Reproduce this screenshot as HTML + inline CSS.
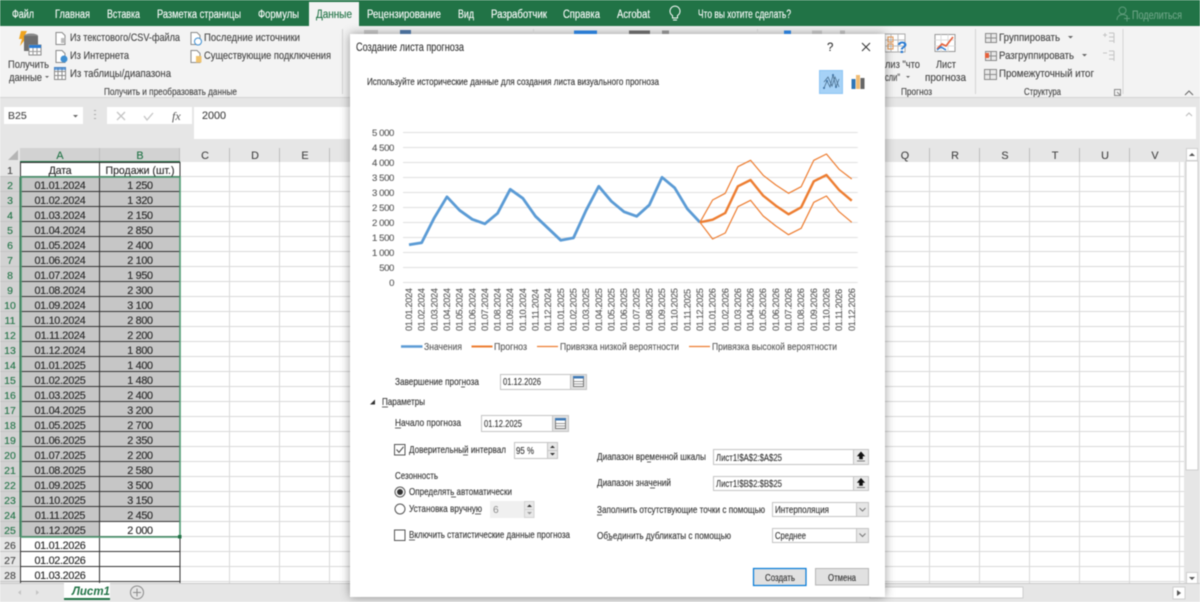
<!DOCTYPE html>
<html lang="ru"><head><meta charset="utf-8"><title>Создание листа прогноза</title>
<style>
html,body{margin:0;padding:0;background:#fff;width:1200px;height:602px;overflow:hidden}
svg{display:block;filter:blur(.4px)}
text{font-family:"Liberation Sans",sans-serif;font-size:10.8px;fill:#444;stroke:#444;stroke-width:.12px;white-space:pre}
.tab{font-size:11.5px;fill:#fff;stroke:#fff}
.c{font-size:10.8px;letter-spacing:-.3px;fill:#262626;stroke:#262626;text-anchor:middle}
.rh{font-size:10.5px;fill:#217346;stroke:#217346;text-anchor:middle}
.rn{font-size:10.5px;fill:#444;text-anchor:middle}
.ch{font-size:10.8px;fill:#444;text-anchor:middle}
.d{font-size:10.2px;fill:#333;stroke:#333}
.ax{font-size:9.6px;letter-spacing:-.4px;fill:#595959;stroke:#595959;text-anchor:end}
.xl{font-size:9.2px;letter-spacing:-.35px;fill:#595959;stroke:#595959}
.lg{font-size:10.2px;fill:#595959;stroke:#595959}
</style></head><body>
<svg width="1200" height="602" viewBox="0 0 1200 602" xmlns="http://www.w3.org/2000/svg">
<defs>
<pattern id="g" x="180" y="162" width="50" height="15" patternUnits="userSpaceOnUse"><path d="M49.500 0V15M0 14.500H50" stroke="#d9d9d9" fill="none"/></pattern>
<pattern id="r" x="0" y="162" width="20" height="15" patternUnits="userSpaceOnUse"><path d="M0 14.500H20" stroke="#c4c4c4" fill="none"/></pattern>
<pattern id="k" x="20" y="162" width="160" height="15" patternUnits="userSpaceOnUse"><path d="M0 14.500H160" stroke="#333" fill="none"/></pattern>
<filter id="sh" x="-5%" y="-5%" width="110%" height="110%"><feDropShadow dx="0" dy="0" stdDeviation="5" flood-color="#000" flood-opacity=".4"/></filter>
</defs>

<!-- ribbon -->
<rect width="1200" height="602" fill="#e6e6e6"/>
<rect width="1200" height="26" fill="#217346"/>
<rect y="26" width="1200" height="71" fill="#f3f3f3"/>
<rect y="97" width="1200" height="1" fill="#d4d4d4"/>
<rect x="309" y="2" width="50" height="24" fill="#f3f3f3"/>
<text class="tab" x="12" y="18" textLength="22" lengthAdjust="spacingAndGlyphs">Файл</text>
<text class="tab" x="55" y="18" textLength="35" lengthAdjust="spacingAndGlyphs">Главная</text>
<text class="tab" x="107" y="18" textLength="33" lengthAdjust="spacingAndGlyphs">Вставка</text>
<text class="tab" x="157" y="18" textLength="84" lengthAdjust="spacingAndGlyphs">Разметка страницы</text>
<text class="tab" x="258" y="18" textLength="41" lengthAdjust="spacingAndGlyphs">Формулы</text>
<text class="tab" x="316" y="18" textLength="36" lengthAdjust="spacingAndGlyphs" style="fill:#217346;stroke:#217346">Данные</text>
<text class="tab" x="367" y="18" textLength="74" lengthAdjust="spacingAndGlyphs">Рецензирование</text>
<text class="tab" x="458" y="18" textLength="16" lengthAdjust="spacingAndGlyphs">Вид</text>
<text class="tab" x="491" y="18" textLength="56" lengthAdjust="spacingAndGlyphs">Разработчик</text>
<text class="tab" x="563" y="18" textLength="37" lengthAdjust="spacingAndGlyphs">Справка</text>
<text class="tab" x="617" y="18" textLength="33" lengthAdjust="spacingAndGlyphs">Acrobat</text>
<path d="M672.500 15.500a5 5 0 1 1 5 0v2.500h-5zM673 20h4" fill="none" stroke="#fff"/>
<text class="tab" x="698" y="18" textLength="93" lengthAdjust="spacingAndGlyphs">Что вы хотите сделать?</text>
<path d="M1122.500 10.500m-3.500 0a3.500 3.500 0 1 0 7 0a3.500 3.500 0 1 0-7 0M1117 20c0-3.500 2.500-5.500 5.500-5.500s4 1 5 2M1124 18.500h6M1127 15.500v6" fill="none" stroke="#5f9c7b"/>
<text class="tab" x="1132" y="19" textLength="50" lengthAdjust="spacingAndGlyphs" style="fill:#6ea587;stroke:#6ea587">Поделиться</text>

<!-- data group icons -->
<path d="M21 31h6l-3 6h3l-7 9 2-7h-3z" fill="#f0a41e"/>
<ellipse cx="31" cy="36" rx="7" ry="2.500" fill="#8a8a8a"/><rect x="24" y="36" width="14" height="15" fill="#6f6f6f"/>
<rect x="29" y="45" width="12" height="10" fill="#fff" stroke="#8a8a8a"/><rect x="29" y="45" width="12" height="3" fill="#2b7cd3"/>
<path d="M33 48v7M37 48v7M29 51.500h12" stroke="#999"/>
<text x="8" y="68" textLength="41" lengthAdjust="spacingAndGlyphs">Получить</text>
<text x="9" y="81" textLength="33" lengthAdjust="spacingAndGlyphs">данные</text><path d="M45 76h4l-2 2z" fill="#666"/>
<g fill="#fff" stroke="#8a8a8a"><path d="M56 32.500h6l3 3v9H56z"/><path d="M56 50.500h6l3 3v9H56z"/><rect x="54.500" y="67.500" width="11" height="12"/><path d="M191 32.500h6l3 3v9h-9zM191 50.500h6l3 3v9h-9z"/></g>
<path d="M54.500 71.500h11M54.500 75.500h11M58 67.500v12M62 67.500v12" stroke="#8a8a8a" fill="none"/>
<rect x="54" y="67" width="12" height="3" fill="#2b7cd3" opacity=".7"/>
<circle cx="64" cy="59" r="3.500" fill="#3f8fd2"/><rect x="61" y="38" width="4" height="5" fill="#bbb"/>
<circle cx="198" cy="41.500" r="3.500" fill="#fff" stroke="#3f8fd2"/><rect x="196" y="56" width="5.500" height="6.500" fill="#f0c36e"/>
<text x="70" y="41" textLength="110" lengthAdjust="spacingAndGlyphs">Из текстового/CSV-файла</text>
<text x="70" y="59" textLength="59" lengthAdjust="spacingAndGlyphs">Из Интернета</text>
<text x="70" y="77" textLength="101" lengthAdjust="spacingAndGlyphs">Из таблицы/диапазона</text>
<text x="204" y="41" textLength="96" lengthAdjust="spacingAndGlyphs">Последние источники</text>
<text x="204" y="59" textLength="127" lengthAdjust="spacingAndGlyphs">Существующие подключения</text>
<text x="104" y="95" textLength="133" lengthAdjust="spacingAndGlyphs" style="font-size:9.800px">Получить и преобразовать данные</text>
<rect x="342" y="29" width="1" height="65" fill="#d4d4d4"/>

<!-- right groups -->
<rect x="885" y="34" width="20" height="18" fill="#fff" stroke="#aaa"/><path d="M891 34v18M898 34v18M885 40h20M885 46h20" stroke="#bbb"/>
<rect x="888" y="37" width="5" height="5" fill="none" stroke="#e99a55"/><rect x="888" y="44" width="5" height="5" fill="none" stroke="#e99a55"/>
<text x="897" y="53" style="font-size:17px;font-weight:bold;fill:#2b7cd3;stroke:none">?</text>
<text x="885" y="68" textLength="35" lengthAdjust="spacingAndGlyphs">лиз "что</text>
<text x="885" y="81" textLength="15" lengthAdjust="spacingAndGlyphs">сли"</text><path d="M906 76h4l-2 2z" fill="#666"/>
<rect x="935" y="34.500" width="20" height="17" fill="#fff" stroke="#999"/><path d="M941 34.500v17M948 34.500v17M935 40h20M935 46h20" stroke="#ddd"/>
<path d="M937 49l5-5 4 2 7-9" fill="none" stroke="#e5603a" stroke-width="1.600"/><path d="M937 50l4-3 5 3" fill="none" stroke="#2b7cd3" stroke-width="1.400"/>
<text x="936" y="68" textLength="20" lengthAdjust="spacingAndGlyphs">Лист</text>
<text x="925" y="81" textLength="41" lengthAdjust="spacingAndGlyphs">прогноза</text>
<text x="901" y="95" textLength="31" lengthAdjust="spacingAndGlyphs" style="font-size:9.800px">Прогноз</text>
<rect x="975" y="29" width="1" height="65" fill="#d4d4d4"/>
<g fill="#e8e8e8" stroke="#8a8a8a"><rect x="985.500" y="33.500" width="11" height="9"/><rect x="985.500" y="51.500" width="11" height="9"/><rect x="984.500" y="69.500" width="12" height="10"/></g>
<path d="M985 38h12M991 33v9M985 56h12M991 51v9M984 74.500h13M990 69v11" stroke="#8a8a8a"/>
<rect x="985" y="53" width="4" height="5" fill="#e5603a"/>
<text x="999" y="41" textLength="61" lengthAdjust="spacingAndGlyphs">Группировать</text><path d="M1068 36h5l-2.500 2.500z" fill="#666"/>
<text x="999" y="59" textLength="75" lengthAdjust="spacingAndGlyphs">Разгруппировать</text><path d="M1082 54h5l-2.500 2.500z" fill="#666"/>
<text x="999" y="77" textLength="95" lengthAdjust="spacingAndGlyphs">Промежуточный итог</text>
<path d="M1103 35h4M1105 33v4M1109 33h5M1109 37h5M1109 41h5M1114 33v10M1103 53h4M1109 51h5M1109 55h5M1109 59h5M1114 51v10" stroke="#c4c4c4" fill="none"/>
<text x="1024" y="95" textLength="37" lengthAdjust="spacingAndGlyphs" style="font-size:9.800px">Структура</text>
<path d="M1114.500 89.500h6v6h-6zM1117 92l3 3" stroke="#8a8a8a" fill="none"/>
<rect x="1122.500" y="29" width="1" height="65" fill="#d4d4d4"/>
<path d="M1185 95l4-4 4 4" fill="none" stroke="#666"/>

<!-- formula bar -->
<rect x="4" y="107" width="79" height="17" fill="#fff"/>
<text x="8" y="119" style="font-size:10.500px">B25</text><path d="M73 115h5l-2.500 2.500z" fill="#666"/>
<path d="M95 110v1M95 114v1M95 118v1" stroke="#aaa" stroke-width="2"/>
<rect x="107" y="107" width="85" height="17" fill="#fff"/>
<path d="M117 112l8 8M125 112l-8 8" stroke="#c4c4c4" stroke-width="1.300"/><path d="M144 116l3 4 6-7" fill="none" stroke="#c4c4c4" stroke-width="1.300"/>
<text x="172" y="120" style="font-family:'Liberation Serif',serif;font-style:italic;font-size:12px;fill:#555;stroke:none">fx</text>
<rect x="194" y="107" width="1002" height="32" fill="#fff"/>
<text x="202" y="119" style="font-size:10.800px">2000</text>
<path d="M1186 116l3-3 3 3" fill="none" stroke="#bbb"/>

<!-- headers -->
<rect y="148" width="1184" height="14" fill="#e6e6e6"/>
<rect x="20" y="148" width="160" height="14" fill="#d2d2d2"/>
<path d="M18 150v10H8z" fill="#b5b5b5"/>
<path d="M99.500 148v14M179.500 148v14M229.500 148v14M279.500 148v14M329.500 148v14M879.500 148v14M929.500 148v14M979.500 148v14M1029.500 148v14M1079.500 148v14M1129.500 148v14" stroke="#bdbdbd"/>
<rect x="20" y="161" width="160" height="1.500" fill="#217346"/>
<text class="ch" x="60" y="159" style="fill:#217346;stroke:#217346">A</text><text class="ch" x="140" y="159" style="fill:#217346;stroke:#217346">B</text>
<text class="ch" x="205" y="159">C</text><text class="ch" x="255" y="159">D</text><text class="ch" x="305" y="159">E</text>
<text class="ch" x="905" y="159">Q</text><text class="ch" x="955" y="159">R</text><text class="ch" x="1005" y="159">S</text><text class="ch" x="1055" y="159">T</text><text class="ch" x="1105" y="159">U</text><text class="ch" x="1155" y="159">V</text>

<!-- sheet -->
<rect x="20" y="162" width="1164" height="421" fill="#fff"/>
<rect x="180" y="162" width="1004" height="421" fill="url(#g)"/>
<rect y="162" width="20" height="421" fill="#e6e6e6"/>
<rect y="177" width="20" height="360" fill="#d2d2d2"/>
<rect y="162" width="20" height="421" fill="url(#r)"/>
<rect x="19.500" y="177" width="1" height="360" fill="#217346"/>
<rect x="20" y="177" width="160" height="345" fill="#c6c6c6"/>
<rect x="20" y="522" width="80" height="15" fill="#c6c6c6"/>
<rect x="20" y="162" width="160" height="421" fill="url(#k)"/>
<path d="M20.500 162V583M99.500 162V583M180 162V583M20 162.500H180" stroke="#333" fill="none"/>
<rect x="21" y="177" width="159" height="360" fill="none" stroke="#4f9a72" stroke-width="1.600"/>
<rect x="178" y="535" width="3.500" height="3.500" fill="#217346"/>

<g>
<text class="rn" x="10" y="174">1</text><text class="c" x="60" y="174">Дата</text><text class="c" x="140" y="174" textLength="69" lengthAdjust="spacingAndGlyphs" style="letter-spacing:0">Продажи (шт.)</text>
<text class="rh" x="10" y="189">2</text><text class="c" x="60" y="189">01.01.2024</text><text class="c" x="140" y="189">1 250</text>
<text class="rh" x="10" y="204">3</text><text class="c" x="60" y="204">01.02.2024</text><text class="c" x="140" y="204">1 320</text>
<text class="rh" x="10" y="219">4</text><text class="c" x="60" y="219">01.03.2024</text><text class="c" x="140" y="219">2 150</text>
<text class="rh" x="10" y="234">5</text><text class="c" x="60" y="234">01.04.2024</text><text class="c" x="140" y="234">2 850</text>
<text class="rh" x="10" y="249">6</text><text class="c" x="60" y="249">01.05.2024</text><text class="c" x="140" y="249">2 400</text>
<text class="rh" x="10" y="264">7</text><text class="c" x="60" y="264">01.06.2024</text><text class="c" x="140" y="264">2 100</text>
<text class="rh" x="10" y="279">8</text><text class="c" x="60" y="279">01.07.2024</text><text class="c" x="140" y="279">1 950</text>
<text class="rh" x="10" y="294">9</text><text class="c" x="60" y="294">01.08.2024</text><text class="c" x="140" y="294">2 300</text>
<text class="rh" x="10" y="309">10</text><text class="c" x="60" y="309">01.09.2024</text><text class="c" x="140" y="309">3 100</text>
<text class="rh" x="10" y="324">11</text><text class="c" x="60" y="324">01.10.2024</text><text class="c" x="140" y="324">2 800</text>
<text class="rh" x="10" y="339">12</text><text class="c" x="60" y="339">01.11.2024</text><text class="c" x="140" y="339">2 200</text>
<text class="rh" x="10" y="354">13</text><text class="c" x="60" y="354">01.12.2024</text><text class="c" x="140" y="354">1 800</text>
<text class="rh" x="10" y="369">14</text><text class="c" x="60" y="369">01.01.2025</text><text class="c" x="140" y="369">1 400</text>
<text class="rh" x="10" y="384">15</text><text class="c" x="60" y="384">01.02.2025</text><text class="c" x="140" y="384">1 480</text>
<text class="rh" x="10" y="399">16</text><text class="c" x="60" y="399">01.03.2025</text><text class="c" x="140" y="399">2 400</text>
<text class="rh" x="10" y="414">17</text><text class="c" x="60" y="414">01.04.2025</text><text class="c" x="140" y="414">3 200</text>
<text class="rh" x="10" y="429">18</text><text class="c" x="60" y="429">01.05.2025</text><text class="c" x="140" y="429">2 700</text>
<text class="rh" x="10" y="444">19</text><text class="c" x="60" y="444">01.06.2025</text><text class="c" x="140" y="444">2 350</text>
<text class="rh" x="10" y="459">20</text><text class="c" x="60" y="459">01.07.2025</text><text class="c" x="140" y="459">2 200</text>
<text class="rh" x="10" y="474">21</text><text class="c" x="60" y="474">01.08.2025</text><text class="c" x="140" y="474">2 580</text>
<text class="rh" x="10" y="489">22</text><text class="c" x="60" y="489">01.09.2025</text><text class="c" x="140" y="489">3 500</text>
<text class="rh" x="10" y="504">23</text><text class="c" x="60" y="504">01.10.2025</text><text class="c" x="140" y="504">3 150</text>
<text class="rh" x="10" y="519">24</text><text class="c" x="60" y="519">01.11.2025</text><text class="c" x="140" y="519">2 450</text>
<text class="rh" x="10" y="534">25</text><text class="c" x="60" y="534">01.12.2025</text><text class="c" x="140" y="534">2 000</text>
<text class="rn" x="10" y="549">26</text><text class="c" x="60" y="549">01.01.2026</text>
<text class="rn" x="10" y="564">27</text><text class="c" x="60" y="564">01.02.2026</text>
<text class="rn" x="10" y="579">28</text><text class="c" x="60" y="579">01.03.2026</text>
</g>

<!-- scrollbars -->
<rect x="1185" y="148" width="15" height="436" fill="#e6e6e6"/>
<rect x="1186" y="161" width="12" height="309" fill="#fff" stroke="#cfcfcf"/>
<rect x="1186.500" y="148.500" width="11" height="12" fill="#fff" stroke="#cfcfcf"/><path d="M1189 156h6l-3-3z" fill="#555"/>
<rect x="1186.500" y="572.500" width="11" height="11" fill="#fff" stroke="#cfcfcf"/><path d="M1189 577h6l-3 3z" fill="#555"/>
<rect y="583" width="1200" height="19" fill="#e6e6e6"/>
<rect y="583" width="1200" height="1" fill="#c8c8c8"/>
<rect x="64" y="583" width="46" height="15" fill="#fff"/><rect x="64" y="598" width="46" height="2" fill="#217346"/>
<text x="72" y="595" style="font-size:11.500px;font-weight:bold;font-style:italic;fill:#217346;stroke:none">Лист1</text>
<circle cx="137" cy="592.500" r="6.500" fill="none" stroke="#8a8a8a"/><path d="M133 592.500h8M137 588.500v8" stroke="#8a8a8a"/>
<path d="M21 590l-3 2.500 3 2.500zM36 590l3 2.500-3 2.500z" fill="#c4c4c4"/>
<rect x="870" y="587" width="153" height="11" fill="#fff" stroke="#cfcfcf"/>
<rect x="1173" y="587" width="12" height="12" fill="#fff" stroke="#cfcfcf"/><path d="M1177 590l4 3-4 3z" fill="#555"/>

<!-- dialog -->
<rect x="350" y="34" width="535" height="563" fill="#fff" filter="url(#sh)"/>
<g fill="#8a8a8a"><rect x="364" y="30" width="14" height="4" opacity=".45"/><rect x="400" y="30" width="11" height="4" fill="#4a6f9a"/><rect x="574" y="30.500" width="23" height="3.500" fill="#2b7cd3"/><rect x="629" y="30.500" width="21" height="3.500" fill="#666"/><rect x="662" y="30.500" width="7" height="3.500"/><rect x="784" y="30.500" width="7" height="3.500" fill="#2b7cd3"/><rect x="812" y="30.500" width="10" height="3.500" opacity=".4"/><rect x="840" y="30.500" width="5" height="3.500" opacity=".5"/><rect x="533" y="29" width="1" height="5" fill="#ccc"/><rect x="757" y="29" width="1" height="5" fill="#ccc"/></g>
<text x="356" y="51" textLength="108" lengthAdjust="spacingAndGlyphs" style="font-size:11.800px;fill:#333;stroke:#333">Создание листа прогноза</text>
<text x="827" y="51" style="font-size:11.500px;fill:#333;stroke:#333">?</text>
<path d="M862 43l8 8M870 43l-8 8" stroke="#333"/>
<text class="d" x="367" y="85" textLength="292" lengthAdjust="spacingAndGlyphs">Используйте исторические данные для создания листа визуального прогноза</text>
<rect x="819.500" y="70.500" width="23" height="23" fill="#a6d2f7" stroke="#8fc6f5"/>
<path d="M824 88l3-7 3 6 3-12 3 12 3-8M824 82l4-5 4 9 3-9 4 10" fill="none" stroke="#4a6f8f" stroke-width=".8"/>
<circle cx="827" cy="81" r="1" fill="#3b6ea0"/><circle cx="833" cy="75" r="1" fill="#3b6ea0"/><circle cx="836" cy="87" r="1" fill="#3b6ea0"/><circle cx="824" cy="88" r="1" fill="#3b6ea0"/>
<rect x="851.500" y="79" width="4" height="10" fill="#2e75b6"/><rect x="856" y="75" width="4" height="14" fill="#f0bc74"/><rect x="860.500" y="78" width="4" height="11" fill="#666"/>

<!-- chart -->
<path d="M403 132.500H857.700M403 147.500H857.700M403 162.500H857.700M403 177.500H857.700M403 192.500H857.700M403 207.500H857.700M403 222.500H857.700M403 237.500H857.700M403 252.500H857.700M403 267.500H857.700M403 282.500H857.700" stroke="#e0e0e0" fill="none"/>
<g>
<text class="ax" x="394" y="136">5 000</text><text class="ax" x="394" y="151">4 500</text><text class="ax" x="394" y="166">4 000</text><text class="ax" x="394" y="181">3 500</text><text class="ax" x="394" y="196">3 000</text><text class="ax" x="394" y="211">2 500</text><text class="ax" x="394" y="226">2 000</text><text class="ax" x="394" y="241">1 500</text><text class="ax" x="394" y="256">1 000</text><text class="ax" x="394" y="271">500</text><text class="ax" x="394" y="286">0</text>
</g>
<polyline fill="none" stroke="#5b9bd5" stroke-width="2.800" stroke-linejoin="round" points="409,244.800 421.650,242.700 434.300,217.800 446.950,196.800 459.600,210.300 472.250,219.300 484.900,223.800 497.550,213.300 510.200,189.300 522.850,198.300 535.500,216.300 548.150,228.300 560.800,240.300 573.450,237.900 586.100,210.300 598.750,186.300 611.400,201.300 624.050,211.800 636.700,216.300 649.350,204.900 662,177.300 674.650,187.800 687.300,208.800 699.950,222.300"/>
<polyline fill="none" stroke="#ed7d31" stroke-width="2.400" stroke-linejoin="round" points="699.950,222.300 712.600,219.700 725.250,213 737.900,186.300 750.550,180 763.200,195.700 775.850,205.700 788.500,214.300 801.150,207.300 813.800,181.300 826.450,175 839.100,190 851.750,200.700"/>
<polyline fill="none" stroke="#ed7d31" stroke-width="1.200" stroke-linejoin="round" points="699.950,222.300 712.600,200 725.250,193.300 737.900,166.700 750.550,160.300 763.200,175.300 775.850,185 788.500,193.300 801.150,186.700 813.800,160.300 826.450,154 839.100,169.300 851.750,179"/>
<polyline fill="none" stroke="#ed7d31" stroke-width="1.200" stroke-linejoin="round" points="699.950,222.300 712.600,239 725.250,233 737.900,206.700 750.550,200.300 763.200,216 775.850,226 788.500,234.700 801.150,228.300 813.800,202.300 826.450,196 839.100,211.700 851.750,222.300"/>
<g>
<text class="xl" transform="translate(412,331) rotate(-90)">01.01.2024</text>
<text class="xl" transform="translate(424.650,331) rotate(-90)">01.02.2024</text>
<text class="xl" transform="translate(437.300,331) rotate(-90)">01.03.2024</text>
<text class="xl" transform="translate(449.950,331) rotate(-90)">01.04.2024</text>
<text class="xl" transform="translate(462.600,331) rotate(-90)">01.05.2024</text>
<text class="xl" transform="translate(475.250,331) rotate(-90)">01.06.2024</text>
<text class="xl" transform="translate(487.900,331) rotate(-90)">01.07.2024</text>
<text class="xl" transform="translate(500.550,331) rotate(-90)">01.08.2024</text>
<text class="xl" transform="translate(513.200,331) rotate(-90)">01.09.2024</text>
<text class="xl" transform="translate(525.850,331) rotate(-90)">01.10.2024</text>
<text class="xl" transform="translate(538.500,331) rotate(-90)">01.11.2024</text>
<text class="xl" transform="translate(551.150,331) rotate(-90)">01.12.2024</text>
<text class="xl" transform="translate(563.800,331) rotate(-90)">01.01.2025</text>
<text class="xl" transform="translate(576.450,331) rotate(-90)">01.02.2025</text>
<text class="xl" transform="translate(589.100,331) rotate(-90)">01.03.2025</text>
<text class="xl" transform="translate(601.750,331) rotate(-90)">01.04.2025</text>
<text class="xl" transform="translate(614.400,331) rotate(-90)">01.05.2025</text>
<text class="xl" transform="translate(627.050,331) rotate(-90)">01.06.2025</text>
<text class="xl" transform="translate(639.700,331) rotate(-90)">01.07.2025</text>
<text class="xl" transform="translate(652.350,331) rotate(-90)">01.08.2025</text>
<text class="xl" transform="translate(665,331) rotate(-90)">01.09.2025</text>
<text class="xl" transform="translate(677.650,331) rotate(-90)">01.10.2025</text>
<text class="xl" transform="translate(690.300,331) rotate(-90)">01.11.2025</text>
<text class="xl" transform="translate(702.950,331) rotate(-90)">01.12.2025</text>
<text class="xl" transform="translate(715.600,331) rotate(-90)">01.01.2026</text>
<text class="xl" transform="translate(728.250,331) rotate(-90)">01.02.2026</text>
<text class="xl" transform="translate(740.900,331) rotate(-90)">01.03.2026</text>
<text class="xl" transform="translate(753.550,331) rotate(-90)">01.04.2026</text>
<text class="xl" transform="translate(766.200,331) rotate(-90)">01.05.2026</text>
<text class="xl" transform="translate(778.850,331) rotate(-90)">01.06.2026</text>
<text class="xl" transform="translate(791.500,331) rotate(-90)">01.07.2026</text>
<text class="xl" transform="translate(804.150,331) rotate(-90)">01.08.2026</text>
<text class="xl" transform="translate(816.800,331) rotate(-90)">01.09.2026</text>
<text class="xl" transform="translate(829.450,331) rotate(-90)">01.10.2026</text>
<text class="xl" transform="translate(842.100,331) rotate(-90)">01.11.2026</text>
<text class="xl" transform="translate(854.750,331) rotate(-90)">01.12.2026</text>
</g>
<path d="M401 346.500h21.500" stroke="#5b9bd5" stroke-width="2.600"/>
<text class="lg" x="424" y="350" textLength="38" lengthAdjust="spacingAndGlyphs">Значения</text>
<path d="M471.500 346.500h21" stroke="#ed7d31" stroke-width="2"/>
<text class="lg" x="494" y="350" textLength="33" lengthAdjust="spacingAndGlyphs">Прогноз</text>
<path d="M537 346.500h21" stroke="#ed7d31" stroke-width="1.200"/>
<text class="lg" x="560" y="350" textLength="119" lengthAdjust="spacingAndGlyphs">Привязка низкой вероятности</text>
<path d="M689 346.500h21" stroke="#ed7d31" stroke-width="1.200"/>
<text class="lg" x="712" y="350" textLength="125" lengthAdjust="spacingAndGlyphs">Привязка высокой вероятности</text>

<!-- form left -->
<text class="d" x="395" y="385" textLength="84" lengthAdjust="spacingAndGlyphs">Завершение прогноза</text>
<rect x="500.500" y="374.500" width="70" height="15" fill="#fff" stroke="#c4c4c4"/>
<text class="d" x="503" y="385" textLength="38" lengthAdjust="spacingAndGlyphs">01.12.2026</text>
<rect x="570.500" y="374.500" width="16" height="15" fill="#e1e1e1" stroke="#c4c4c4"/>
<rect x="573.500" y="376.500" width="10" height="10" fill="#fff" stroke="#777"/><rect x="573" y="376" width="11" height="2.500" fill="#3f79b5"/><path d="M574 381.500h9M574 384h9" stroke="#999"/>

<path d="M370 404.500l5-5v5z" fill="#333"/>
<text class="d" x="382" y="405" textLength="43" lengthAdjust="spacingAndGlyphs">Параметры</text>
<text class="d" x="395" y="426" textLength="66" lengthAdjust="spacingAndGlyphs">Начало прогноза</text>
<rect x="481.500" y="415.500" width="71" height="16" fill="#fff" stroke="#c4c4c4"/>
<text class="d" x="484" y="427" textLength="38" lengthAdjust="spacingAndGlyphs">01.12.2025</text>
<rect x="552.500" y="415.500" width="16" height="16" fill="#e1e1e1" stroke="#c4c4c4"/>
<rect x="555.500" y="418.500" width="10" height="10" fill="#fff" stroke="#777"/><rect x="555" y="418" width="11" height="2.500" fill="#3f79b5"/><path d="M556 423.500h9M556 426h9" stroke="#999"/>

<rect x="394.500" y="444.500" width="10.500" height="10.500" fill="#fff" stroke="#555"/><path d="M396.500 449.500l2.500 2.800 4.500-5.500" fill="none" stroke="#444"/>
<text class="d" x="409" y="453" textLength="97" lengthAdjust="spacingAndGlyphs">Доверительный интервал</text>
<rect x="514.500" y="442.500" width="43" height="16" fill="#fff" stroke="#c4c4c4"/>
<text class="d" x="516" y="454" textLength="18" lengthAdjust="spacingAndGlyphs">95 %</text>
<rect x="547.500" y="442.500" width="10" height="8" fill="#e8e8e8" stroke="#c4c4c4"/><rect x="547.500" y="450.500" width="10" height="8" fill="#e8e8e8" stroke="#c4c4c4"/>
<path d="M550 448h5l-2.500-2.500zM550 453h5l-2.500 2.500z" fill="#333"/>

<text class="d" x="395" y="479" textLength="43" lengthAdjust="spacingAndGlyphs">Сезонность</text>
<circle cx="400" cy="492" r="5" fill="#fff" stroke="#555"/><circle cx="400" cy="492" r="3" fill="#333"/>
<text class="d" x="409" y="495" textLength="103" lengthAdjust="spacingAndGlyphs">Определять автоматически</text>
<circle cx="400" cy="509" r="5" fill="#fff" stroke="#555"/>
<text class="d" x="409" y="512" textLength="73" lengthAdjust="spacingAndGlyphs">Установка вручную</text>
<rect x="490" y="501" width="34" height="17" fill="#f0f0f0"/>
<text class="d" x="493" y="513" style="fill:#8a8a8a;stroke:none">6</text>
<rect x="524.500" y="501.500" width="9.500" height="8" fill="#e8e8e8" stroke="#d4d4d4"/><rect x="524.500" y="509.500" width="9.500" height="8" fill="#e8e8e8" stroke="#d4d4d4"/>
<path d="M527 507h5l-2.500-2.500z" fill="#333"/><path d="M527 512h5l-2.500 2.500z" fill="#999"/>
<rect x="394.500" y="530" width="10.500" height="10.500" fill="#fff" stroke="#555"/>
<text class="d" x="409" y="538" textLength="161" lengthAdjust="spacingAndGlyphs">Включить статистические данные прогноза</text>

<!-- accelerators -->
<path d="M461 387h4M382 407h6M395 428h6M463 455h5M451 497h5M475 514h6M409 540h6M647 462h4M650 488h5M597 515h5M607 540h5" stroke="#333" stroke-width=".8" fill="none"/>

<!-- form right -->
<text class="d" x="597" y="460" textLength="109" lengthAdjust="spacingAndGlyphs">Диапазон временной шкалы</text>
<rect x="713.500" y="449.500" width="140" height="15" fill="#fff" stroke="#c4c4c4"/>
<text class="d" x="716" y="461" textLength="66" lengthAdjust="spacingAndGlyphs">Лист1!$A$2:$A$25</text>
<rect x="853.500" y="449.500" width="15" height="15" fill="#e9e9e9" stroke="#c4c4c4"/>
<path d="M861 452l-3.500 4h2v3h3v-3h2zM857 461h8" fill="#111" stroke="#111" stroke-width=".6"/>
<text class="d" x="597" y="486" textLength="74" lengthAdjust="spacingAndGlyphs">Диапазон значений</text>
<rect x="713.500" y="476.500" width="140" height="14" fill="#fff" stroke="#c4c4c4"/>
<text class="d" x="716" y="487" textLength="66" lengthAdjust="spacingAndGlyphs">Лист1!$B$2:$B$25</text>
<rect x="853.500" y="476.500" width="15" height="14" fill="#e9e9e9" stroke="#c4c4c4"/>
<path d="M861 478.500l-3.500 4h2v3h3v-3h2zM857 487.500h8" fill="#111" stroke="#111" stroke-width=".6"/>
<text class="d" x="597" y="513" textLength="168" lengthAdjust="spacingAndGlyphs">Заполнить отсутствующие точки с помощью</text>
<rect x="772.500" y="502.500" width="96" height="14" fill="#fff" stroke="#c4c4c4"/>
<rect x="856.500" y="502.500" width="12" height="14" fill="#e6e6e6" stroke="#c4c4c4"/>
<path d="M859.500 508l3 3 3-3" fill="none" stroke="#777"/>
<text class="d" x="775" y="513" textLength="54" lengthAdjust="spacingAndGlyphs">Интерполяция</text>
<text class="d" x="597" y="539" textLength="134" lengthAdjust="spacingAndGlyphs">Объединить дубликаты с помощью</text>
<rect x="772.500" y="528.500" width="96" height="14" fill="#fff" stroke="#c4c4c4"/>
<rect x="856.500" y="528.500" width="12" height="14" fill="#e6e6e6" stroke="#c4c4c4"/>
<path d="M859.500 533.500l3 3 3-3" fill="none" stroke="#777"/>
<text class="d" x="775" y="539" textLength="31" lengthAdjust="spacingAndGlyphs">Среднее</text>
<rect x="753.500" y="568.500" width="52.500" height="17" fill="#e1e1e1" stroke="#0078d7" stroke-width="1.200"/>
<text class="d" x="765" y="581" textLength="30" lengthAdjust="spacingAndGlyphs">Создать</text>
<rect x="815.500" y="568.500" width="53" height="16.500" fill="#e1e1e1" stroke="#b5b5b5"/>
<text class="d" x="828" y="581" textLength="28" lengthAdjust="spacingAndGlyphs">Отмена</text>
</svg>
</body></html>
